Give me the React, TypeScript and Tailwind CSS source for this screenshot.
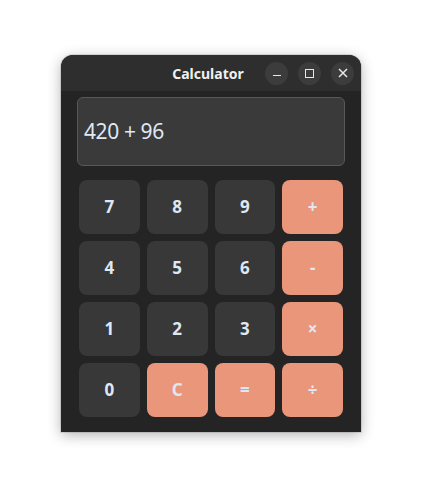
const keys = [
  { label: '7', op: false },
  { label: '8', op: false },
  { label: '9', op: false },
  { label: '+', op: true },
  { label: '4', op: false },
  { label: '5', op: false },
  { label: '6', op: false },
  { label: '-', op: true },
  { label: '1', op: false },
  { label: '2', op: false },
  { label: '3', op: false },
  { label: '×', op: true },
  { label: '0', op: false },
  { label: 'C', op: true },
  { label: '=', op: true },
  { label: '÷', op: true },
];

const WindowButton = ({ children }: { children: React.ReactNode }) => (
  <div className="w-[23px] h-[23px] rounded-full bg-[#3c3c3c] flex items-center justify-center">
    {children}
  </div>
);

export default function App() {
  return (
    <div
      className="min-h-[499px] w-[422px] bg-white pl-[61px] pt-[55px]"
      style={{ fontFamily: '"Noto Sans", "Open Sans", sans-serif' }}
    >
      <div className="w-[300px] h-[377px] rounded-t-[12px] overflow-hidden bg-[#242424] shadow-[0_3px_14px_rgba(0,0,0,0.3)] ring-1 ring-black/10 flex flex-col">
        {/* header bar */}
        <div className="h-[36px] bg-[#2e2e2e] grid grid-cols-[1fr_auto_1fr] items-center">
          <div />
          <div className="text-[14px] font-bold text-[#f0f0f0] pr-[6px]">Calculator</div>
          <div className="flex justify-end gap-[10px] pr-[7px]">
            <WindowButton>
              <div className="w-[8px] h-[1.5px] bg-[#e8e8e8] mt-[5px]" />
            </WindowButton>
            <WindowButton>
              <div className="w-[9px] h-[9px] border-[1.5px] border-[#e8e8e8]" />
            </WindowButton>
            <WindowButton>
              <svg width="10" height="10" viewBox="0 0 10 10">
                <path d="M1 1 L9 9 M9 1 L1 9" stroke="#e8e8e8" strokeWidth="1.5" />
              </svg>
            </WindowButton>
          </div>
        </div>

        <div className="px-[16px] pt-[6px]">
          <div className="h-[69px] rounded-[6px] border-[1.5px] border-[#585858] bg-[#3a3a3a] flex items-center px-[6px]">
            <span className="text-[21px] tracking-[-0.4px] text-[#dfe8f4] mt-[1px]">420 + 96</span>
          </div>
        </div>

        <div className="px-[18px] pt-[14px] grid grid-cols-4 gap-x-[7px] gap-y-[7px] w-[300px]">
          {keys.map((k) => (
            <div
              key={k.label}
              className={`h-[54px] rounded-[8px] flex items-center justify-center text-[17px] font-bold text-[#dfe7f2] ${
                k.op ? 'bg-[#e9967a]' : 'bg-[#383838]'
              }`}
            >
              {k.label}
            </div>
          ))}
        </div>
      </div>
    </div>
  );
}
